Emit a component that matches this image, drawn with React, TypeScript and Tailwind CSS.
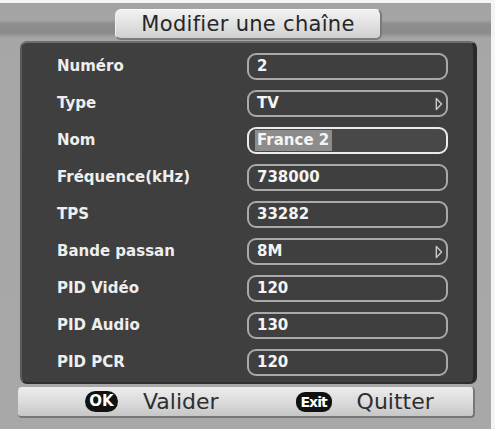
import React from "react";

const rows: { label: string; value: string; arrow?: boolean; active?: boolean }[] = [
  { label: "Numéro", value: "2" },
  { label: "Type", value: "TV", arrow: true },
  { label: "Nom", value: "France 2", active: true },
  { label: "Fréquence(kHz)", value: "738000" },
  { label: "TPS", value: "33282" },
  { label: "Bande passan", value: "8M", arrow: true },
  { label: "PID Vidéo", value: "120" },
  { label: "PID Audio", value: "130" },
  { label: "PID PCR", value: "120" },
];

function Arrow() {
  return (
    <svg width="8" height="14" viewBox="0 0 8 14" className="ml-auto mr-[3px]">
      <path d="M1.3 1.5 L6.6 7 L1.3 12.5 Z" fill="none" stroke="#c8c8c8" strokeWidth="1.4" strokeLinejoin="round" />
    </svg>
  );
}

export default function App() {
  return (
    <div
      className="w-[495px] h-[429px] flex flex-col bg-white overflow-hidden"
      style={{ fontFamily: '"DejaVu Sans", Verdana, sans-serif' }}
    >
      <div className="h-[3px] shrink-0 bg-[#f4f4f4]" />
      <div className="flex flex-1">
        <div className="w-[491px] h-full flex flex-col bg-[linear-gradient(180deg,#a3a3a3_0px,#a5a5a5_17px,#8d8d8d_21px,#8b8b8b_30px,#a6a6a6_35px,#a8a8a8_100%)]">
          {/* Title tab */}
          <div className="ml-[115px] mt-[6px] w-[267px] h-[31px] rounded-[6px] bg-[linear-gradient(180deg,#f2f2f2,#dedede_60%,#cfcfcf)] border-b-2 border-r-2 border-[#7a7a7a] border-t border-l border-t-[#fafafa] border-l-[#f0f0f0] flex items-center justify-center">
            <span className="text-[21px] leading-none text-[#262626] tracking-[0.3px]">Modifier une chaîne</span>
          </div>

          {/* Panel */}
          <div className="ml-[20px] mt-[1px] w-[457px] h-[343px] rounded-[7px] bg-[#3f3f3f] border-t-2 border-t-[#6e6e6e] border-l-2 border-l-[#5a5a5a] border-r-[4px] border-r-[#2a2a2a] border-b-2 border-b-[#2e2e2e] pt-[5px] flex flex-col">
            {rows.map((r) => (
              <div key={r.label} className="h-[37px] flex items-center shrink-0">
                <div className="w-[225px] pl-[35px] text-[15px] font-bold text-[#eeeeee] leading-none">
                  {r.label}
                </div>
                <div
                  className={
                    "w-[201px] h-[27px] rounded-[9px] border-2 flex items-center pl-[6px] " +
                    (r.active ? "border-[#ececec] bg-[#484848]" : "border-[#a9a9a9] bg-[#3f3f3f]")
                  }
                >
                  {r.active ? (
                    <span className="bg-[#8c8c8c] h-[21px] flex items-center pl-[2px] pr-[3px] text-[15px] font-bold text-[#f4f4f4] leading-none">
                      {r.value}
                    </span>
                  ) : (
                    <span className="pl-[2px] text-[15px] font-bold text-[#f4f4f4] leading-none">{r.value}</span>
                  )}
                  {r.arrow && <Arrow />}
                </div>
              </div>
            ))}
          </div>

          {/* Footer */}
          <div className="ml-[18px] mt-[3px] w-[457px] h-[31px] rounded-[4px] bg-[linear-gradient(180deg,#ececec,#dcdcdc_50%,#c6c6c6)] border-b-2 border-r-2 border-[#777] flex items-center">
            <div className="ml-[67px] w-[33px] h-[21px] rounded-full bg-[#111] flex items-center justify-center">
              <span className="text-[15px] font-bold text-white leading-none">OK</span>
            </div>
            <span className="ml-[25px] text-[22px] text-[#2e2e2e] leading-none">Valider</span>
            <div className="ml-[77px] w-[36px] h-[20px] rounded-[9px] bg-[#111] flex items-center justify-center">
              <span className="text-[14px] font-bold text-white leading-none tracking-[-1px]">Exit</span>
            </div>
            <span className="ml-[25px] text-[22px] text-[#2e2e2e] leading-none">Quitter</span>
          </div>
        </div>
        <div className="flex-1 bg-[#f4f4f4]" />
      </div>
    </div>
  );
}
